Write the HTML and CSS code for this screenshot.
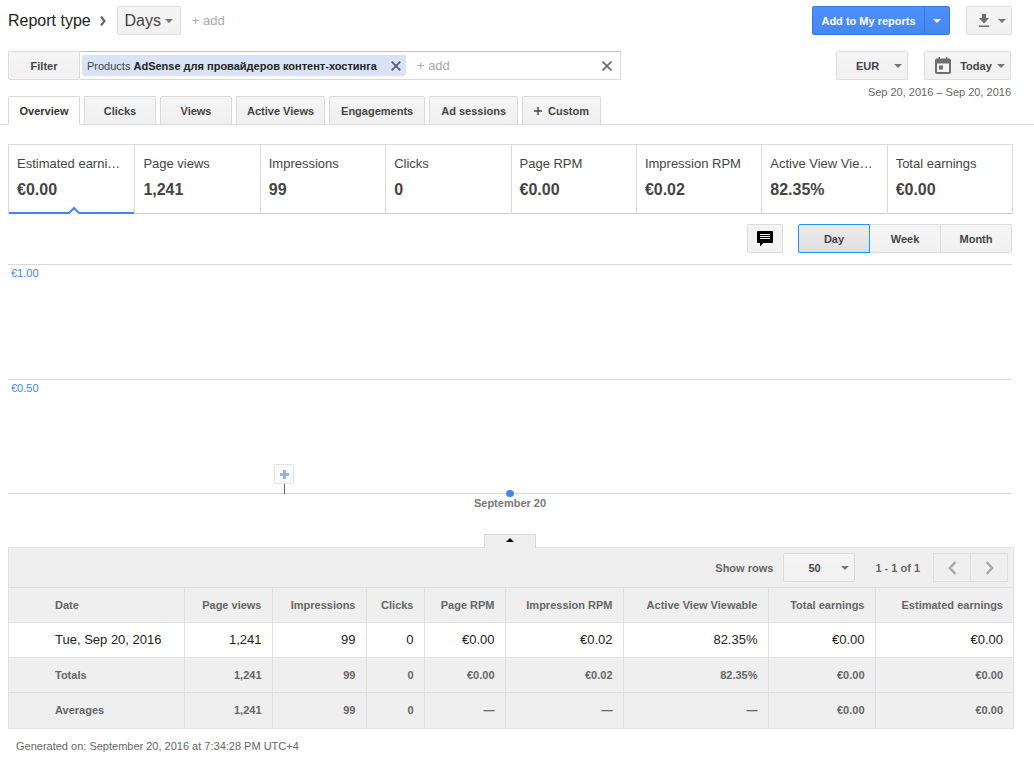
FILE: index.html
```html
<!DOCTYPE html>
<html lang="en">
<head>
<meta charset="utf-8">
<title>Report</title>
<link rel="stylesheet" href="styles.css">
</head>
<body>
<header class="topbar">
  <span class="title">Report type</span>
  <svg class="crumb" width="6" height="10" viewBox="0 0 6 10"><path d="M1 .5 4.500 5 1 9.500" fill="none" stroke="#666" stroke-width="2.200"/></svg>
  <button class="btn btn-days" type="button">Days <span class="caret"></span></button>
  <button class="add-link" type="button">+ add</button>
  <div class="split">
    <button class="primary primary-main" type="button">Add to My reports</button>
    <button class="primary primary-more" type="button" aria-label="More report options"><span class="caret caret-light"></span></button>
  </div>
  <button class="btn btn-download" type="button" aria-label="Download">
    <svg width="12" height="14" viewBox="0 0 12 14"><path d="M4 0h4v4h3L6 9.500 1 4h3zM1 11.500h10v1.500H1z" fill="#6e6e6e"/></svg>
    <span class="caret"></span>
  </button>
</header>

<section class="controls">
  <div class="controls-left">
    <div class="filter">
      <button class="btn filter-btn" type="button">Filter</button>
      <div class="filter-box">
        <span class="chip">
          <span>Products <b>AdSense для провайдеров контент-хостинга</b></span>
          <button class="close" type="button" aria-label="Remove filter"><svg width="10" height="10" viewBox="0 0 10 10"><path d="M.7.7l8.600 8.600M9.300.7.7 9.300" stroke="#555b66" stroke-width="1.700"/></svg></button>
        </span>
        <input class="filter-input" type="text" placeholder="+ add" aria-label="Add filter">
        <button class="close" type="button" aria-label="Clear filters"><svg width="10" height="10" viewBox="0 0 10 10"><path d="M.5.5l9 9M9.500.5l-9 9" stroke="#666" stroke-width="1.600"/></svg></button>
      </div>
    </div>
    <nav class="tabs">
      <button class="tab tab-active" type="button">Overview</button>
      <button class="tab" type="button">Clicks</button>
      <button class="tab" type="button">Views</button>
      <button class="tab" type="button">Active Views</button>
      <button class="tab" type="button">Engagements</button>
      <button class="tab" type="button">Ad sessions</button>
      <button class="tab" type="button"><svg class="plus" width="8" height="8" viewBox="0 0 8 8"><path d="M0 4h8M4 0v8" stroke="#444" stroke-width="1.400"/></svg>Custom</button>
    </nav>
  </div>
  <div class="controls-right">
    <div class="pickers">
      <span class="select-wrap">
        <select class="btn select select-currency" aria-label="Currency"><option>EUR</option></select>
        <span class="caret"></span>
      </span>
      <button class="btn btn-date" type="button">
        <svg width="16" height="18" viewBox="0 0 16 18"><path d="M2 1.500h1.500V0H5v1.500h6V0h1.500v1.500H14a2 2 0 0 1 2 2V15a2 2 0 0 1-2 2H2a2 2 0 0 1-2-2V3.500a2 2 0 0 1 2-2zM2 6.500V15h12V6.500zM4 8.500h4v4H4z" fill="#6e6e6e" fill-rule="evenodd"/></svg>
        <span>Today</span>
        <span class="caret"></span>
      </button>
    </div>
    <div class="range">Sep 20, 2016 – Sep 20, 2016</div>
  </div>
</section>

<main class="main">
  <section class="metrics">
    <div class="metric metric-active"><div class="metric-name">Estimated earnings</div><div class="metric-value">€0.00</div>
      <svg class="notch" width="14" height="8" viewBox="0 0 14 8"><path d="M1.500 6 7 .5 12.500 6v2h-11z" fill="#fff"/><path d="M0 7h2L7 2l5 5h2" fill="none" stroke="#4285f4" stroke-width="2"/></svg>
    </div>
    <div class="metric"><div class="metric-name">Page views</div><div class="metric-value">1,241</div></div>
    <div class="metric"><div class="metric-name">Impressions</div><div class="metric-value">99</div></div>
    <div class="metric"><div class="metric-name">Clicks</div><div class="metric-value">0</div></div>
    <div class="metric"><div class="metric-name">Page RPM</div><div class="metric-value">€0.00</div></div>
    <div class="metric"><div class="metric-name">Impression RPM</div><div class="metric-value">€0.02</div></div>
    <div class="metric"><div class="metric-name">Active View Viewable</div><div class="metric-value">82.35%</div></div>
    <div class="metric"><div class="metric-name">Total earnings</div><div class="metric-value">€0.00</div></div>
  </section>

  <div class="chart-tools">
    <button class="btn btn-note" type="button" aria-label="Annotations">
      <svg width="16" height="16" viewBox="0 0 16 16"><path d="M1 0h14a1 1 0 0 1 1 1v10a1 1 0 0 1-1 1H6.500L3 15.500V12H1a1 1 0 0 1-1-1V1a1 1 0 0 1 1-1z" fill="#000"/><path d="M3 3.500h10M3 5.500h10M3 7.500h10" stroke="#f3f3f3"/></svg>
    </button>
    <div class="segment">
      <button class="seg seg-active" type="button">Day</button>
      <button class="seg" type="button">Week</button>
      <button class="seg" type="button">Month</button>
    </div>
  </div>

  <section class="chart">
    <div class="plot">
      <div class="band">€1.00</div>
      <div class="band">€0.50</div>
      <button class="marker" type="button" aria-label="Add annotation"><svg width="9" height="9" viewBox="0 0 9 9"><path d="M3 0h3v3h3v3H6v3H3V6H0V3h3z" fill="#94b4df"/></svg></button>
      <span class="point"></span>
    </div>
    <div class="axis">September 20</div>
  </section>

  <section class="report">
    <button class="fold" type="button" aria-label="Collapse chart"><span class="fold-arrow"></span></button>
    <div class="panel">
      <div class="pager">
        <label for="rows">Show rows</label>
        <span class="select-wrap">
          <select id="rows" class="btn select select-rows"><option>50</option></select>
          <span class="caret"></span>
        </span>
        <span class="count">1 - 1 of 1</span>
        <div class="page-nav">
          <button class="page-btn" type="button" aria-label="Previous page"><svg width="9" height="14" viewBox="0 0 9 14"><path d="M7.500 1 1.800 7l5.700 6" fill="none" stroke="#aaa" stroke-width="2.500"/></svg></button>
          <button class="page-btn" type="button" aria-label="Next page"><svg width="9" height="14" viewBox="0 0 9 14"><path d="M1.500 1l5.700 6-5.700 6" fill="none" stroke="#aaa" stroke-width="2.500"/></svg></button>
        </div>
      </div>
      <table class="data">
        <colgroup><col><col class="c-views"><col class="c-impr"><col class="c-clicks"><col class="c-rpm"><col class="c-irpm"><col class="c-active"><col class="c-total"><col class="c-est"></colgroup>
        <thead>
          <tr><th>Date</th><th>Page views</th><th>Impressions</th><th>Clicks</th><th>Page RPM</th><th>Impression RPM</th><th>Active View Viewable</th><th>Total earnings</th><th>Estimated earnings</th></tr>
        </thead>
        <tbody>
          <tr><td>Tue, Sep 20, 2016</td><td>1,241</td><td>99</td><td>0</td><td>€0.00</td><td>€0.02</td><td>82.35%</td><td>€0.00</td><td>€0.00</td></tr>
        </tbody>
        <tfoot>
          <tr><th>Totals</th><td>1,241</td><td>99</td><td>0</td><td>€0.00</td><td>€0.02</td><td>82.35%</td><td>€0.00</td><td>€0.00</td></tr>
          <tr><th>Averages</th><td>1,241</td><td>99</td><td>0</td><td>—</td><td>—</td><td>—</td><td>€0.00</td><td>€0.00</td></tr>
        </tfoot>
      </table>
    </div>
  </section>
  <footer class="generated">Generated on: September 20, 2016 at 7:34:28 PM UTC+4</footer>
</main>
</body>
</html>
```

FILE: styles.css
```css
* { box-sizing: border-box; }

body {
  margin: 0;
  background: #fff;
  color: #444;
  font: 11px/14px "Liberation Sans", Arial, sans-serif;
}

button, select, input { font: inherit; color: inherit; margin: 0; padding: 0; }
button { cursor: pointer; }
svg { display: block; flex: none; }

.btn {
  display: flex;
  align-items: center;
  justify-content: center;
  height: 29px;
  border: 1px solid #dcdcdc;
  border-radius: 2px;
  background: linear-gradient(#f5f5f5, #f1f1f1);
  font-weight: bold;
}

.caret {
  flex: none;
  border: 4px solid transparent;
  border-top-color: #777;
  border-bottom: 0;
}
.caret-light { border-top-color: #fff; }

/* Top bar */
.topbar {
  display: flex;
  align-items: center;
  padding: 6px 22px 16px 8px;
}
.title { color: #222; font-size: 16px; line-height: 20px; }
.crumb { margin: 0 11px 0 9px; }
.btn-days { width: 64px; gap: 4px; font-size: 16px; font-weight: normal; }
.add-link {
  margin-left: 11px;
  border: 0;
  background: none;
  color: #aaa;
  font-size: 13px;
}
.split { display: flex; margin: 0 16px 0 auto; }
.primary {
  display: flex;
  align-items: center;
  justify-content: center;
  height: 29px;
  border: 1px solid #3079ed;
  background: linear-gradient(#4d90fe, #4787ed);
  color: #fff;
  font-weight: bold;
}
.primary-main { width: 113px; border-radius: 2px 0 0 2px; }
.primary-more { width: 26px; margin-left: -1px; border-radius: 0 2px 2px 0; }
.btn-download { width: 46px; gap: 8px; padding-left: 6px; }

/* Filter, tabs, pickers */
.controls {
  display: flex;
  justify-content: space-between;
  padding: 0 23px 0 8px;
  border-bottom: 1px solid #d9d9d9;
}
.filter { display: flex; width: 613px; margin-bottom: 16px; }
.filter-btn { width: 72px; border-radius: 2px 0 0 2px; }
.filter-box {
  display: flex;
  flex: 1;
  align-items: center;
  height: 29px;
  padding: 0 8px 0 2px;
  border: 1px solid #d9d9d9;
  border-top-color: #c0c0c0;
  border-left: 0;
}
.chip {
  display: flex;
  flex: none;
  align-items: center;
  gap: 14px;
  height: 21px;
  padding: 0 5px;
  border-radius: 2px;
  background: #dae3f5;
  white-space: nowrap;
}
.chip b { color: #222; }
.close { padding: 0; border: 0; background: none; }
.filter-input {
  flex: 1;
  min-width: 0;
  padding-left: 11px;
  border: 0;
  outline: 0;
  background: none;
  font-size: 13px;
}
.filter-input::placeholder { color: #aaa; opacity: 1; }

.tabs { display: flex; gap: 4px; margin-bottom: -1px; }
.tab {
  display: flex;
  align-items: center;
  justify-content: center;
  min-width: 72px;
  height: 29px;
  padding: 0 10px;
  border: 1px solid #d9d9d9;
  border-radius: 2px 2px 0 0;
  background: linear-gradient(#f5f5f5, #f0f0f0);
  font-weight: bold;
}
.tab:nth-child(n + 5) { padding: 0 11px; }
.tab-active { border-bottom-color: #fff; background: #fff; color: #333; }
.plus { margin-right: 6px; }

.pickers { display: flex; gap: 16px; justify-content: flex-end; }
.select-wrap { position: relative; display: flex; }
.select-wrap .caret { position: absolute; top: 13px; right: 6px; pointer-events: none; }
.select { width: 72px; appearance: none; }
.select-currency { padding-left: 19px; }
.select-rows { padding-left: 24px; }
.btn-date { width: 87px; gap: 5px; padding-left: 5px; }
.btn-date svg { margin-right: 4px; }
.range { margin-top: 5px; color: #666; text-align: right; }

/* Metric cards */
.main { padding: 19px 21px 0 8px; }
.metrics {
  display: grid;
  grid-template-columns: repeat(8, minmax(0, 1fr));
  border: 1px solid #d9d9d9;
  border-bottom: 0;
}
.metric {
  position: relative;
  height: 69px;
  padding: 10px 8px 0;
  border-left: 1px solid #d9d9d9;
  border-bottom: 1px solid #ccc;
}
.metric-active { border-left: 0; border-bottom: 2px solid #4285f4; }
.metric-name {
  overflow: hidden;
  font-size: 13px;
  line-height: 18px;
  text-overflow: ellipsis;
  white-space: nowrap;
}
.metric-value { margin-top: 7px; font-size: 16px; font-weight: bold; line-height: 20px; }
.notch { position: absolute; bottom: -2px; left: calc(50% - 5px); }

/* Chart */
.chart-tools { display: flex; justify-content: flex-end; gap: 15px; padding: 10px 1px 11px 0; }
.btn-note { width: 36px; }
.segment { display: flex; }
.seg {
  width: 72px;
  height: 29px;
  margin-left: -1px;
  border: 1px solid #dcdcdc;
  background: linear-gradient(#f5f5f5, #f1f1f1);
  font-weight: bold;
}
.seg:last-child { border-radius: 0 2px 2px 0; }
.seg-active {
  z-index: 1;
  margin-left: 0;
  border-color: #1a94f5;
  border-radius: 2px 0 0 2px;
  background: linear-gradient(#ececec, #dedede);
}
.chart { margin-right: 1px; }
.plot { position: relative; border-bottom: 1px solid #d9d9d9; }
.band {
  height: 115px;
  padding: 1px 3px;
  border-top: 1px solid #d9d9d9;
  color: #4285f4;
}
.band + .band { height: 114px; }
.marker {
  position: absolute;
  bottom: 9px;
  left: 266px;
  display: flex;
  align-items: center;
  justify-content: center;
  width: 20px;
  height: 20px;
  border: 1px solid #e2e2e2;
  border-radius: 2px;
  background: #fafafa;
}
.marker::after {
  content: "";
  position: absolute;
  top: 19px;
  left: 9px;
  width: 1px;
  height: 10px;
  background: #666;
}
.point {
  position: absolute;
  bottom: -4px;
  left: calc(50% - 4px);
  width: 8px;
  height: 7px;
  border-radius: 50%;
  background: #4285f4;
}
.axis { margin-top: 2px; color: #777; font-weight: bold; text-align: center; }

/* Report table */
.report { display: flex; flex-direction: column; margin: 24px -1px 0 0; }
.fold {
  z-index: 1;
  display: flex;
  align-items: flex-start;
  justify-content: center;
  align-self: center;
  width: 52px;
  height: 14px;
  margin: 0 2px -1px 0;
  padding-top: 3px;
  border: 1px solid #d9d9d9;
  border-bottom: 0;
  background: #efefef;
}
.fold-arrow { border: 4px solid transparent; border-top: 0; border-bottom-color: #000; }
.panel { border: 1px solid #e2e2e2; background: #efefef; }
.pager {
  display: flex;
  align-items: center;
  justify-content: flex-end;
  height: 39px;
  padding-right: 5px;
  color: #666;
  font-weight: bold;
}
.pager label { margin-right: 10px; }
.pager .select { color: #444; }
.count { margin: 0 13px 0 20px; }
.page-nav { display: flex; }
.page-btn {
  display: flex;
  align-items: center;
  justify-content: center;
  width: 38px;
  height: 29px;
  border: 1px solid #e0e0e0;
  background: none;
}
.page-btn + .page-btn { margin-left: -1px; }

.data { width: 100%; border-collapse: collapse; table-layout: fixed; color: #666; }
.c-views { width: 88px; }
.c-impr { width: 94px; }
.c-clicks { width: 58px; }
.c-rpm { width: 81px; }
.c-irpm { width: 118px; }
.c-active { width: 145px; }
.c-total { width: 107px; }
.c-est { width: 138px; }
.data th, .data td {
  height: 35px;
  padding: 0 10px 0 0;
  border-top: 1px solid #e0e0e0;
  border-left: 1px solid #e0e0e0;
  font-weight: bold;
  text-align: right;
  white-space: nowrap;
}
.data th:first-child, .data td:first-child { padding-left: 46px; border-left: 0; text-align: left; }
.data tbody td { background: #fff; color: #222; font-size: 13px; font-weight: normal; }

.generated { padding: 10px 8px 16px; color: #666; }
```
